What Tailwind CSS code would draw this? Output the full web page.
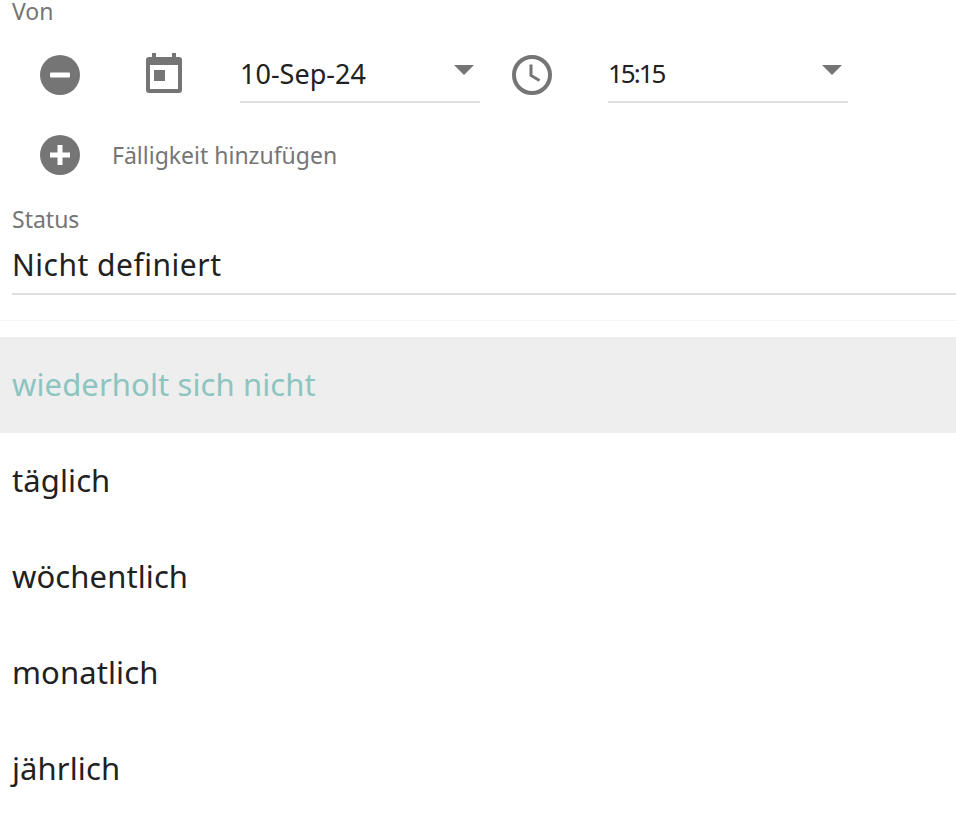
<!DOCTYPE html>
<html lang="de">
<head>
  <meta charset="UTF-8" />
  <meta name="viewport" content="width=device-width, initial-scale=1.0"/>
  <title>Termin</title>
  <script src="https://cdn.jsdelivr.net/npm/@tailwindcss/browser@4"></script>
</head>
<body class="bg-white h-[824px] overflow-hidden font-['Noto_Sans',sans-serif] text-[#212121]">
  <!-- Von -->
  <div class="h-[35px] pl-3 text-[23px] leading-[23px] text-[#757575]">Von</div>
  <div class="h-[80px] flex items-center">
    <div class="w-[120px] flex justify-center">
      <svg class="w-10 h-10" viewBox="0 0 40 40"><circle cx="20" cy="20" r="20" fill="#757575"/><rect x="10" y="17.5" width="20" height="5" rx="1" fill="#fff"/></svg>
    </div>
    <div class="w-[120px] pl-[26px] self-start mt-[18px]">
      <svg class="w-9 h-10" viewBox="0 0 36 40"><rect x="6" y="0" width="4" height="6" fill="#757575"/><rect x="26" y="0" width="4" height="6" fill="#757575"/><rect x="0" y="4" width="36" height="36" rx="3" fill="#757575"/><rect x="4" y="12" width="28" height="24" fill="#fff"/><rect x="8" y="17" width="11" height="11" fill="#757575"/></svg>
    </div>
    <div class="w-[240px] h-[55px] relative border-b-2 border-[#e0e0e0] text-[27px] leading-[51px] self-start mt-[13px]">
      10-Sep-24
      <span class="absolute right-[6px] top-[17px] w-0 h-0 border-x-[10px] border-x-transparent border-t-[10px] border-t-[#757575]"></span>
    </div>
    <div class="w-[128px] pl-[32px]">
      <svg class="w-10 h-10" viewBox="0 0 40 40" fill="none" stroke="#757575"><circle cx="20" cy="20" r="18" stroke-width="4"/><path d="M19 9.5v11l8.5 5" stroke-width="3"/></svg>
    </div>
    <div class="w-[240px] h-[55px] relative border-b-2 border-[#e0e0e0] text-[26px] leading-[51px] tracking-[-2px] self-start mt-[13px]">
      15:15
      <span class="absolute right-[6px] top-[17px] w-0 h-0 border-x-[10px] border-x-transparent border-t-[10px] border-t-[#757575]"></span>
    </div>
  </div>
  <!-- Fälligkeit -->
  <div class="h-[80px] flex items-center">
    <div class="w-[120px] flex justify-center shrink-0">
      <svg class="w-10 h-10" viewBox="0 0 40 40"><circle cx="20" cy="20" r="20" fill="#757575"/><path fill="#fff" d="M17.5 10h5v7.5H30v5h-7.5V30h-5v-7.5H10v-5h7.5z"/></svg>
    </div>
    <span class="ml-[-8px] text-[23px] text-[#757575]">Fälligkeit hinzufügen</span>
  </div>
  <!-- Status -->
  <div class="ml-3 h-[110px] border-b-2 border-[#e0e0e0] mt-[-10px] pt-[19px]">
    <div class="text-[23px] leading-[30px] text-[#757575]">Status</div>
    <div class="mt-[7px] text-[30px] leading-[48px] tracking-[0.5px]">Nicht definiert</div>
  </div>
  <div class="mt-[25px] h-[1px] bg-[#f5f5f5]"></div>
  <!-- Wiederholung -->
  <ul class="mt-[16px] text-[31px] tracking-[0.1px]">
    <li class="h-24 pl-3 pb-[2px] flex items-center bg-[#eeeeee] text-[#8cc5c0]">wiederholt sich nicht</li>
    <li class="h-24 pl-3 pb-[2px] flex items-center">täglich</li>
    <li class="h-24 pl-3 pb-[2px] flex items-center">wöchentlich</li>
    <li class="h-24 pl-3 pb-[2px] flex items-center">monatlich</li>
    <li class="h-24 pl-3 pb-[2px] flex items-center">jährlich</li>
  </ul>
</body>
</html>
